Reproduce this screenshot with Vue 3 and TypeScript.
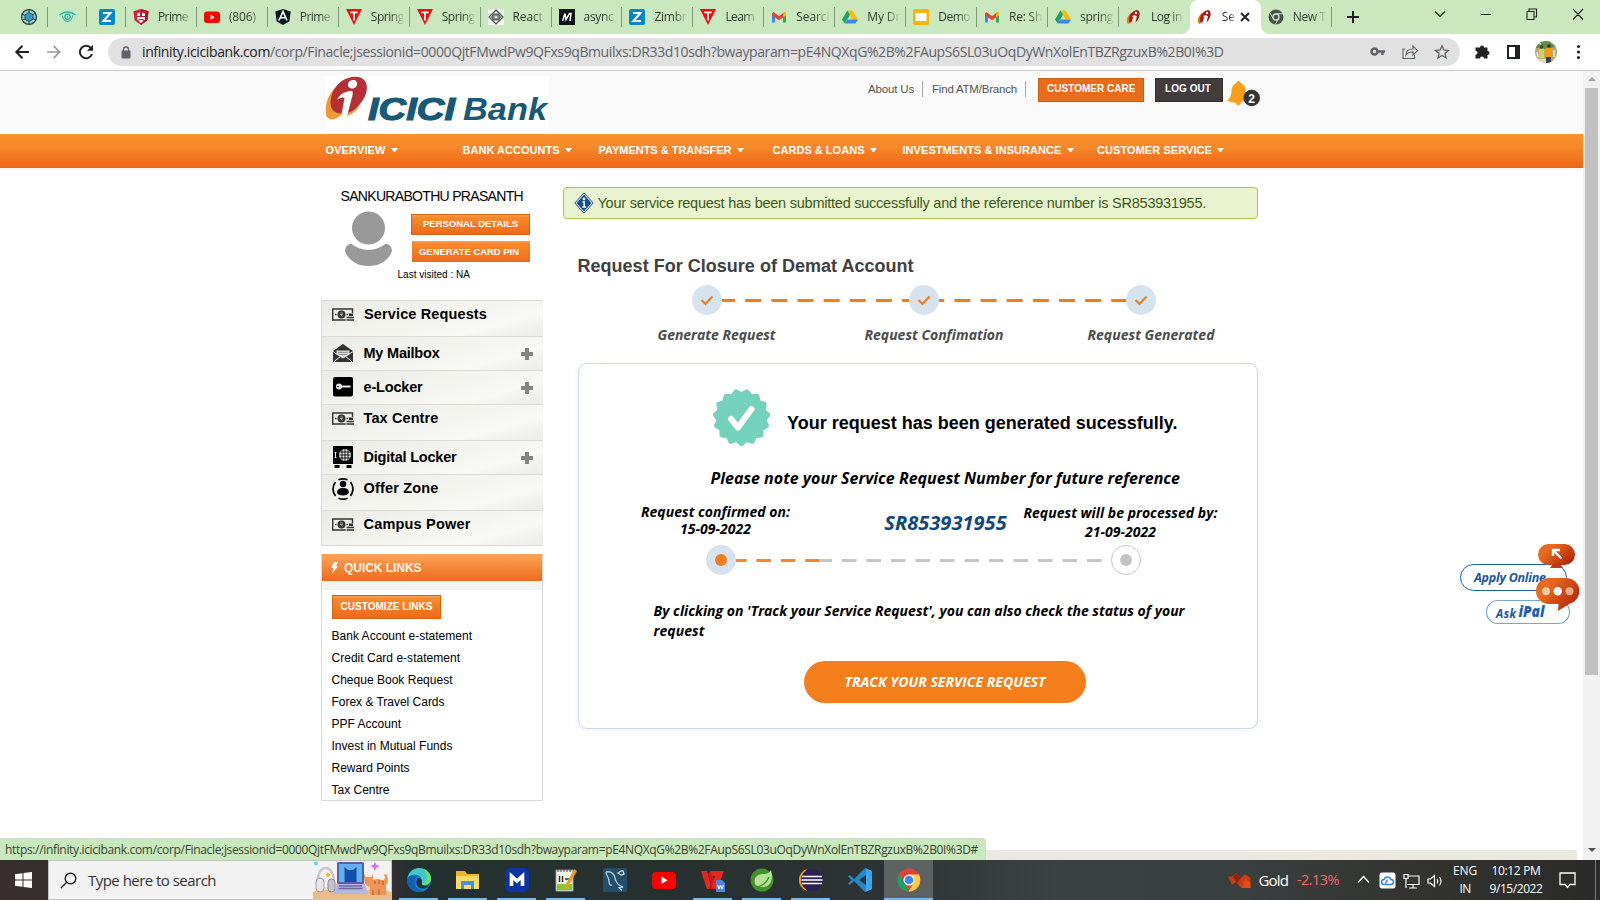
<script setup lang="ts">
interface Tab { icon: string; label?: string; w?: number; active?: boolean }
interface NavItem { label: string; gap: number; w: number }
interface MenuItem { icon: string; label: string; w: number; h: number; top: number; plus?: boolean }

// Stretches or tightens a line of text to a given width through its letter spacing.
const vFit = {
  mounted(el: HTMLElement, binding: { value?: number }) {
    if (!binding.value) return
    const n = (el.textContent ?? '').trim().length
    el.style.letterSpacing = `${(binding.value - el.getBoundingClientRect().width) / n}px`
  },
}

const tabs: Tab[] = [
  { icon: 'shield', label: 'Prime', w: 30 },
  { icon: 'youtube', label: '(806)', w: 27 },
  { icon: 'angular', label: 'Prime', w: 30 },
  { icon: 'tri', label: 'Spring', w: 33 },
  { icon: 'tri', label: 'Spring', w: 33 },
  { icon: 'react', label: 'React', w: 30 },
  { icon: 'medium', label: 'async', w: 30 },
  { icon: 'zimbra', label: 'Zimbr', w: 32 },
  { icon: 'tri', label: 'Learn', w: 29 },
  { icon: 'gmail', label: 'Searcl', w: 33 },
  { icon: 'drive', label: 'My Dr', w: 33 },
  { icon: 'slides', label: 'Demo', w: 32 },
  { icon: 'gmail', label: 'Re: Sh', w: 33 },
  { icon: 'drive', label: 'spring', w: 33 },
  { icon: 'icici', label: 'Log in', w: 31 },
  { icon: 'icici', label: 'Se', w: 13, active: true },
  { icon: 'chrome', label: 'New T', w: 33 },
]

const nav: NavItem[] = [
  { label: 'OVERVIEW', gap: 325.5, w: 60 },
  { label: 'BANK ACCOUNTS', gap: 65, w: 97 },
  { label: 'PAYMENTS & TRANSFER', gap: 27, w: 133 },
  { label: 'CARDS & LOANS', gap: 29, w: 92 },
  { label: 'INVESTMENTS & INSURANCE', gap: 26, w: 159 },
  { label: 'CUSTOMER SERVICE', gap: 23.5, w: 115 },
]

const menu: MenuItem[] = [
  { icon: 'cash', label: 'Service Requests', w: 123, h: 36, top: 4 },
  { icon: 'mail', label: 'My Mailbox', w: 76, h: 34, top: 7, plus: true },
  { icon: 'key', label: 'e-Locker', w: 59, h: 34, top: 7, plus: true },
  { icon: 'cash', label: 'Tax Centre', w: 75, h: 36, top: 4 },
  { icon: 'safe', label: 'Digital Locker', w: 93, h: 34, top: 7, plus: true },
  { icon: 'offer', label: 'Offer Zone', w: 75, h: 36, top: 4 },
  { icon: 'cash', label: 'Campus Power', w: 107, h: 36, top: 4 },
]

const links = [
  { label: 'Bank Account e-statement', w: 140.5 },
  { label: 'Credit Card e-statement', w: 128.5 },
  { label: 'Cheque Book Request', w: 121 },
  { label: 'Forex & Travel Cards', w: 113 },
  { label: 'PPF Account', w: 69.5 },
  { label: 'Invest in Mutual Funds', w: 121 },
  { label: 'Reward Points', w: 78 },
  { label: 'Tax Centre', w: 58 },
]

const apps = [
  { name: 'edge', open: true }, { name: 'folder', open: true }, { name: 'm', open: true },
  { name: 'notepad', open: true }, { name: 'mysql' }, { name: 'yt' }, { name: 'wps', open: true },
  { name: 'spring', open: true }, { name: 'eclipse', open: true }, { name: 'vscode' },
  { name: 'chrome', open: true, active: true },
]

const teeth = 15
const seal = Array.from({ length: teeth * 3 }, (_, i) => {
  const step = (Math.PI * 2) / teeth
  const k = Math.floor(i / 3)
  const off = [0, 0.42, 0.58][i % 3]
  const r = i % 3 === 0 ? 25.4 : 28.7
  const a = -Math.PI / 2 + step * (k + off)
  return `${(28.5 + r * Math.cos(a)).toFixed(2)},${(28.5 + r * Math.sin(a)).toFixed(2)}`
}).join(' ')
</script>

<template>
  <div class="screen">
    <div class="tabstrip">
      <div class="mini first">
        <svg width="18" height="18" viewBox="0 0 18 18"><circle cx="9" cy="9" r="7.4" fill="#a9cfc9" stroke="#24413f" stroke-width="1.3" /><path d="M9 1v4M9 13v4M1.5 6l4 1.5M12.500 10.500l4 1.500M2 12.500l4-2M12 7l4-2" stroke="#24413f" /><path d="M9 4.500l4 2.300v4.500L9 13.500l-4-2.200V6.800z" fill="#3099c5" stroke="#1c4e63" /></svg>
      </div>
      <div class="mini second">
        <svg width="17" height="12" viewBox="0 0 17 12"><path d="M.5 4Q8.500-2 16.500 4" fill="none" stroke="#27b5ad" stroke-width="1.500" /><path d="M3.500 4.500Q4 10 8.500 10.500 13 10 13.500 4.500" fill="none" stroke="#27b5ad" stroke-width="1" /><circle cx="8.500" cy="5.800" r="2.600" fill="none" stroke="#27b5ad" stroke-width="1.300" /><circle cx="8.500" cy="5.800" r=".9" fill="#27b5ad" /></svg>
      </div>
      <div class="mini third">
        <svg width="16" height="16" viewBox="0 0 16 16"><rect width="16" height="16" rx="2" fill="#0089c9" /><path d="M4 4h7.500L4.500 12H12" fill="none" stroke="#fff" stroke-width="2" /></svg>
      </div>
      <div v-for="(t, i) in tabs" :key="i" class="tab" :class="{ active: t.active, before: i === 14 }">
        <svg class="fav" width="16" height="16" viewBox="0 0 16 16">
          <g v-if="t.icon === 'shield'"><path d="M8 0l7.500 2.300-1 9L8 16l-6.500-4.700-1-9z" fill="#dd1b36" /><path d="M8 0l7.500 2.300-1 9L8 16z" fill="#b3142b" /><path d="M4 4.500l3-1v3.500H4zM9 3.500l3 1V7H9zM4 8h8v2.500l-1.500 1.200V10h-5v1.700L4 10.500zM6.300 11h3.400v2l-1.700 1-1.700-1z" fill="#fff" /></g>
          <g v-else-if="t.icon === 'youtube'"><rect y="2.500" width="16" height="11.500" rx="3" fill="red" /><path d="M6.500 5.700v5L10.800 8.200z" fill="#fff" /></g>
          <g v-else-if="t.icon === 'angular'"><path d="M8 0l7.700 2.600-1.200 9.700L8 16l-6.500-3.700L.3 2.600z" fill="#0e1621" /><path d="M4 11.500L8 2.500l4 9M5.600 8.800h4.800" fill="none" stroke="#fff" stroke-width="1.600" /></g>
          <g v-else-if="t.icon === 'tri'"><path d="M0 0h16L8 16z" fill="#f40d0d" /><path d="M4.300 3.400h7.400M8 3.400v8" stroke="#fff" stroke-width="1.800" /></g>
          <g v-else-if="t.icon === 'react'"><path d="M0 0h16v16H0z" fill="#f5f5f5" /><path d="M8 1l7 7-7 7-7-7z" fill="none" stroke="#444" stroke-width="1.100" /><path d="M5.500 5h5l2 3-2 3h-5l-2-3z" fill="#6f9480" stroke="#333" stroke-width=".8" /><circle cx="8" cy="8" r="1.300" fill="#e4eee8" /></g>
          <g v-else-if="t.icon === 'medium'"><path d="M0 0h16v16H0z" fill="#111118" /><path d="M3.500 12L6 4.500l1 6 3.500-6 1.500 0-1 7.500" fill="none" stroke="#fff" stroke-width="1.500" /></g>
          <g v-else-if="t.icon === 'zimbra'"><rect width="16" height="16" rx="2" fill="#0089c9" /><path d="M4 4h7.500L4.500 12H12" fill="none" stroke="#fff" stroke-width="2" /></g>
          <g v-else-if="t.icon === 'gmail'"><path d="M1 4v9.500h3V7z" fill="#4285f4" /><path d="M15 4v9.500h-3V7z" fill="#34a853" /><path d="M1 4.500L2.500 3 8 7.300 13.500 3 15 4.500v1.800L8 11.300 1 6.300z" fill="#ea4335" /><path d="M12 5l1.600-2L15 4.500v2L12 8.600z" fill="#fbbc04" /></g>
          <g v-else-if="t.icon === 'drive'"><path d="M5.400 1.500h5L16 10.500h-5.200z" fill="#fbbc04" /><path d="M5.400 1.500L8 5.800 2.700 14.500 0 10.500z" fill="#1fa463" /><path d="M5.200 10.500H16l-2.600 4H2.700z" fill="#4285f4" /></g>
          <g v-else-if="t.icon === 'slides'"><rect width="16" height="16" rx="2" fill="#f7b407" /><path d="M2.500 4h11v8h-11z" fill="#fff" /></g>
          <g v-else-if="t.icon === 'icici'"><path d="M5 4C0 8 0 13 2 15l3-1L8 7z" fill="#e5791f" /><path d="M3.500 13C1.500 8 6 1.500 11 1c4 .5 3.500 8-1.500 12.500L11 7 7 7.500 5.500 13z" fill="#a31a1f" /><circle cx="10" cy="4" r="1.200" fill="#fff" /><path d="M6.500 7.500Q8 6.700 9.300 7L7.500 13" fill="none" stroke="#fff" stroke-width="1.100" /></g>
          <g v-else><circle cx="8" cy="8" r="7.500" fill="#4b4f52" /><circle cx="8" cy="8" r="3" fill="#4b4f52" stroke="#cae8bd" stroke-width="1.300" /><path d="M8 4.800h7M5.200 9.500L2 4M10.700 9.500L7.300 15.300" stroke="#cae8bd" /></g>
        </svg>
        <span class="tlabel" :class="{ short: t.active }"><span v-fit="t.w">{{ t.label }}</span></span>
        <svg v-if="t.active" class="x" width="10" height="10" viewBox="0 0 10 10"><path d="M1 1l8 8M9 1L1 9" stroke="#222" stroke-width="1.900" /></svg>
      </div>
      <svg class="newtab" width="12" height="12" viewBox="0 0 12 12"><path d="M6 0v12M0 6h12" stroke="#202124" stroke-width="2" /></svg>
      <svg class="winctl" width="160" height="14" viewBox="0 0 160 14" fill="none" stroke="#222" stroke-width="1.100"><path d="M5 4.500l5 5 5-5M51 7.500h10M97 4.500h7v8h-7zM99 4.500V2h7.500v8H104M143 2l10 10.500M153 2l-10 10.500" /></svg>
    </div>

    <div class="toolbar">
      <svg class="navicons" width="80" height="18" viewBox="0 0 80 18" fill="none" stroke-width="2">
        <path d="M15 9H2.500M8.500 2.800L2.300 9l6.200 6.200" stroke="#202124" />
        <path d="M33 9h12M39.500 2.800L45.700 9l-6.200 6.200" stroke="#9b9b9b" stroke-width="1.700" />
        <path d="M77 5.200A6.200 6.200 0 1 0 78 11" stroke="#202124" /><path d="M79 1.800v6h-6z" fill="#202124" />
      </svg>
      <div class="omnibox">
        <svg class="lock" width="10" height="13" viewBox="0 0 10 13"><rect x=".5" y="4.500" width="9" height="8" rx="1" fill="#5f6368" /><path d="M2.500 5V3.500a2.500 2.500 0 0 1 5 0V5" fill="none" stroke="#5f6368" stroke-width="1.300" /></svg>
        <span v-fit="128" class="host">infinity.icicibank.com</span><span v-fit="953.500" class="path">/corp/Finacle;jsessionid=0000QjtFMwdPw9QFxs9qBmuilxs:DR33d10sdh?bwayparam=pE4NQXqG%2B%2FAupS6SL03uOqDyWnXolEnTBZRgzuxB%2B0I%3D</span>
        <svg class="omniicons" width="80" height="16" viewBox="0 0 80 16" fill="none" stroke="#5f6368" stroke-width="1.300">
          <circle cx="4.500" cy="7.500" r="3" stroke-width="2.500" /><path d="M8 7.500h7M12.500 7.500v3.500" stroke-width="2.500" />
          <path d="M35 5H33v9.500h11.500V11M36 11c0-4 3-6 7-6V2l4.500 4.700L43 11V8c-3 0-5.500.500-7 3z" stroke-width="1.100" />
          <path d="M72 1.800l1.900 4.200 4.600.4-3.500 3 1.100 4.600-4.100-2.500L68 14l1-4.600-3.500-3 4.700-.4z" />
        </svg>
      </div>
      <svg class="ext" width="130" height="24" viewBox="0 0 130 24">
        <path d="M3.500 7.500H7a2 2 0 1 1 4 0h3.500V11a2 2 0 1 1 0 4v3.500H11a2 2 0 0 0-4 0H2.500v-3.700a2 2 0 0 0 0-4V7.500z" fill="#202124" />
        <path d="M35 6h11v12H35z" fill="#fff" stroke="#202124" stroke-width="2" /><path d="M42 6h5v12h-5z" fill="#202124" />
        <clipPath id="av"><circle cx="73" cy="12" r="11" /></clipPath>
        <g clip-path="url(#av)"><path d="M62 0h22v24H62z" fill="#b8a877" /><path d="M62 0h22v6l-9 3-13-1z" fill="#5d8e48" /><path d="M66 9h5v9h-5z" fill="#c7d94a" /><path d="M73 8h6v9h-6z" fill="#f09b10" /><path d="M73 17h5v7h-5z" fill="#3b3d54" /><circle cx="68.500" cy="7" r="1.800" fill="#5b3a28" /><circle cx="76" cy="6" r="1.800" fill="#4a2d22" /><path d="M62 19h11v5H62z" fill="#e5d9c2" /><path d="M63 2l5 2M78 2l4 3M64 12l1 5M81 10v7" stroke="#f3ecd0" stroke-width="1.500" /></g>
        <g fill="#202124"><circle cx="105.500" cy="6.500" r="1.600" /><circle cx="105.500" cy="12" r="1.600" /><circle cx="105.500" cy="17.500" r="1.600" /></g>
      </svg>
    </div>

    <div class="viewport">
      <div class="page">
        <div class="header">
          <div class="logo">
            <svg width="224" height="53" viewBox="0 0 224 53">
              <path d="M10 12C1 20-1 36 2 41c3 4 9 3 14-2L31 34 20 12z" fill="#f3982f" />
              <path d="M31 .8C44 1 44 15 38 24 34 30 29 35 23 38L15 37.500C5 36 4 28 7 18 11 7 21 .5 31 .8z" fill="#b53034" />
              <path d="M21.500 40c6-2 11-6 14.500-12-4 4-9 8-14 9z" fill="#f3982f" />
              <ellipse cx="27.500" cy="8.200" rx="4.700" ry="4.200" fill="#fff" transform="rotate(-25 27.500 8.200)" />
              <path d="M12 24c3-6.500 9-9 15-9 1.500 1 .5 5-1 10L22 40l-6.500 3.500L19.500 22c-3-1-5 0-7.500 2z" fill="#fff" />
              <text class="lt heavy" x="43" y="44" textLength="87" lengthAdjust="spacingAndGlyphs">ICICI</text>
              <text class="lt" x="138" y="44" textLength="84" lengthAdjust="spacingAndGlyphs">Bank</text>
            </svg>
          </div>
          <div class="toplinks">
            <span v-fit="46">About Us</span><i /><span v-fit="85">Find ATM/Branch</span><i />
          </div>
          <div class="btn care"><span v-fit="88.500">CUSTOMER CARE</span></div>
          <div class="btn out"><span v-fit="46">LOG OUT</span></div>
          <div class="bell">
            <svg width="34" height="28" viewBox="0 0 34 28"><path d="M11 1c2 0 2.500 2 2.500 2 4.500 2 5 5 5 9 0 5 1 6 3 8L14 22c0 4-5 4-5 1L0 21c3-3 4-5 4.500-9 0-5 2-8 5-9 0-1 .5-2 1.500-2z" fill="#ff9e18" /><circle cx="24.700" cy="18" r="8.300" fill="#333" /><text x="24.700" y="22.600" text-anchor="middle" class="bn">2</text></svg>
          </div>
        </div>
        <div class="nav">
          <div v-for="n in nav" :key="n.label" class="navitem" :style="{ marginLeft: n.gap + 'px' }"><span v-fit="n.w">{{ n.label }}</span><b /></div>
        </div>
        <div class="after" />

        <div class="body">
          <div class="side">
            <div class="name"><span v-fit="182.500">SANKURABOTHU PRASANTH</span></div>
            <div class="profile">
              <svg width="48" height="56" viewBox="0 0 48 56"><circle cx="23.500" cy="17" r="16.500" fill="#999" /><path d="M6 32.500C16 41 31 41 41 32.500q6 1.500 6 7.500C44 49 35 55 23.500 55S3 49 0 40q0-6 6-7.500z" fill="#999" /></svg>
              <div class="pbtns">
                <div class="pb bordered"><span v-fit="95">PERSONAL DETAILS</span></div>
                <div class="pb"><span v-fit="100">GENERATE CARD PIN</span></div>
              </div>
            </div>
            <div class="last"><span v-fit="72.500">Last visited : NA</span></div>
            <div class="menu">
              <div v-for="m in menu" :key="m.label" class="mi" :style="{ height: m.h + 'px', paddingTop: m.top + 'px' }">
                <svg width="24" height="22" viewBox="0 0 24 22">
                  <g v-if="m.icon === 'cash'"><path d="M20.500 9V5H.7v11h13" fill="none" stroke="#333" stroke-width="1.400" /><circle cx="9.500" cy="10.500" r="4" fill="#333" /><path d="M8 9h3M8 10.500h3M9 10.500l1.500 2" stroke="#ccc" stroke-width=".7" fill="none" /><path d="M3 10.500h1.500M14.500 10.500H16" stroke="#333" stroke-width="1.500" /><path d="M17 9.500h4v2.500h-4z" fill="#333" /><path d="M14.500 13.500H22M14.500 16H22" stroke="#333" stroke-width="1.700" /></g>
                  <g v-else-if="m.icon === 'mail'"><path d="M1 8L11 1l10 7v11H1z" fill="#333" /><path d="M4.500 7.500h13v4L11 15l-6.500-3.500z" fill="#d4d4ce" /><path d="M2 18.500l6.500-5M20 18.500l-6.500-5M1 8.500l10 6.500 10-6.500" stroke="#eee" fill="none" /><path d="M6 9.500h10M7 11.500h8" stroke="#888" stroke-width=".8" /></g>
                  <g v-else-if="m.icon === 'key'"><rect x="1" y="0" width="20" height="19.500" rx="2" fill="#000" /><circle cx="7" cy="9.500" r="3" fill="#e9e9e9" /><path d="M9 9.500h9.500" stroke="#e9e9e9" stroke-width="2" /><circle cx="6" cy="9.500" r=".8" fill="#000" /></g>
                  <g v-else-if="m.icon === 'safe'"><path d="M1-1h20v18H1zM2.500 18h5v3h-5zM14.500 18h5v3h-5z" fill="#000" /><circle cx="13" cy="8" r="6" fill="#eee" /><path d="M7.500 5h11M7.500 8h11M7.500 11h11M10 2.500v11M13 2v12M16 2.500v11" stroke="#000" stroke-width=".9" /><path d="M2.500 5.500h2M2.500 10.500h2M3.500 5.500v5" stroke="#eee" /></g>
                  <g v-else><circle cx="11" cy="6" r="3.200" /><path d="M5 15q0-5 6-5t6 5q-2 2.500-6 2.500t-6-2.500z" /><path d="M3.500 4Q-1.500 11 3.500 18M18.500 4q5 7 0 14M6.500 1.800q4.500-2 9 0M6.500 20.200q4.500 2 9 0" fill="none" stroke="#000" stroke-width="1.700" /></g>
                </svg>
                <span class="ml"><span v-fit="m.w">{{ m.label }}</span></span>
                <i v-if="m.plus" class="plus" />
              </div>
            </div>
            <div class="quick">
              <div class="qh"><svg width="7" height="12" viewBox="0 0 7 12"><path d="M3 0h4L5 4h2L1 12l1.500-6H0z" fill="#fff" /></svg><span v-fit="77.500">QUICK LINKS</span></div>
              <div class="qs" />
              <div class="cust"><span v-fit="92">CUSTOMIZE LINKS</span></div>
              <div v-for="l in links" :key="l.label" class="ql"><span v-fit="l.w">{{ l.label }}</span></div>
            </div>
          </div>

          <div class="main">
            <div class="msg">
              <svg width="20" height="22" viewBox="0 0 20 22"><path d="M10 .8L19.200 11 10 21.200.8 11z" fill="#fff" stroke="#1c4d80" /><path d="M10 2.500l7.500 8.500-7.500 8.500L2.500 11z" fill="#14508f" /><circle cx="10" cy="7" r="1.400" fill="#fff" /><path d="M8.500 10h1.700v4.500M8.300 15h3.800" stroke="#fff" stroke-width="1.500" fill="none" /></svg>
              <span v-fit="608.500">Your service request has been submitted successfully and the reference number is SR853931955.</span>
            </div>
            <div class="title"><span v-fit="336">Request For Closure of Demat Account</span></div>
            <svg class="steps" width="695" height="30" viewBox="0 0 695 30">
              <path d="M156 15.500H563" stroke="#f27d1b" stroke-width="3" stroke-dasharray="16 10.150" />
              <g v-for="x in [144, 361, 578]" :key="x"><circle :cx="x" cy="15" r="15" fill="#d6e3ee" /><path :d="`M${x - 5.500} 15l4 4 7-7.500`" fill="none" stroke="#f27d1b" stroke-width="2.200" /></g>
            </svg>
            <div class="labels"><span v-fit="118">Generate Request</span><span v-fit="139">Request Confimation</span><span v-fit="127">Request Generated</span></div>
            <div class="card">
              <div class="done">
                <svg width="57" height="57" viewBox="0 0 57 57"><polygon :points="seal" fill="#74d2bc" /><path d="M18 30l7 8.500L38.500 20" fill="none" stroke="#fff" stroke-width="6" stroke-linejoin="round" stroke-linecap="round" /></svg>
                <span v-fit="390.500">Your request has been generated sucessfully.</span>
              </div>
              <div class="note"><span v-fit="469.500">Please note your Service Request Number for future reference</span></div>
              <div class="info">
                <div class="c1"><span v-fit="149">Request confirmed on:</span><span v-fit="71">15-09-2022</span></div>
                <div class="c2"><span v-fit="122.500">SR853931955</span></div>
                <div class="c3"><span v-fit="194">Request will be processed by:</span><span v-fit="71">21-09-2022</span></div>
              </div>
              <svg class="track" width="678" height="30" viewBox="0 0 678 30">
                <path d="M153 15.500h88" stroke="#f6862c" stroke-width="2.800" stroke-dasharray="14.500 9.900" />
                <path d="M241 15.500h12M263 15.500H524" stroke="#c6c6c6" stroke-width="2.800" stroke-dasharray="14.500 10" />
                <circle cx="142" cy="15" r="15" fill="#d6e3ee" /><circle cx="142" cy="15" r="6" fill="#f27d1b" />
                <circle cx="547" cy="15" r="14.500" fill="#fff" stroke="#c4c4c4" /><circle cx="547" cy="15" r="6" fill="#c4c4c4" />
              </svg>
              <div class="para"><span v-fit="531">By clicking on 'Track your Service Request', you can also check the status of your</span><span v-fit="51">request</span></div>
              <div class="cta"><span v-fit="201">TRACK YOUR SERVICE REQUEST</span></div>
            </div>
          </div>
        </div>
        <div class="foot" />
        <svg class="ipal" width="125" height="90" viewBox="0 0 125 90">
          <defs><linearGradient id="og" x1="0" y1="0" x2="1" y2=".6"><stop offset=".3" stop-color="#e96c1e" /><stop offset="1" stop-color="#b52a0a" /></linearGradient></defs>
          <rect x="2.500" y="24.500" width="106" height="26" rx="13" fill="#fff" stroke="#1f62a5" />
          <rect x="28.500" y="60.500" width="83" height="23" rx="11.500" fill="#fff" stroke="#7aa5d2" stroke-width="1.200" />
          <text class="ap" x="16" y="41.500" textLength="72">Apply Online</text>
          <text class="ap ask" x="38" y="77.500" textLength="20">Ask</text>
          <text class="ap pal" x="60.500" y="76.500" textLength="26" lengthAdjust="spacingAndGlyphs">iPal</text>
          <rect x="80" y="4" width="37" height="21" rx="10.500" fill="url(#og)" /><path d="M95 24h7l3 4H92z" fill="#bd3b10" />
          <path d="M95 16V10h7M95.500 10.500l8 8" fill="none" stroke="#fff" stroke-width="2.400" />
          <path d="M91 38h18a13 13 0 0 1 3 25.500L100 71l.5-7H91a13 13 0 0 1 0-26z" fill="url(#og)" />
          <circle cx="88" cy="51.300" r="4" fill="#f7c9a9" /><circle cx="99.700" cy="51.300" r="4.200" fill="#fff" /><circle cx="111.500" cy="51.300" r="4" fill="#f2a98c" />
        </svg>
      </div>
      <div class="scroll"><b class="up" /><div class="thumb" /><b class="down" /></div>
      <div class="status"><span v-fit="973">https://infinity.icicibank.com/corp/Finacle;jsessionid=0000QjtFMwdPw9QFxs9qBmuilxs:DR33d10sdh?bwayparam=pE4NQXqG%2B%2FAupS6SL03uOqDyWnXolEnTBZRgzuxB%2B0I%3D#</span></div>
    </div>

    <div class="taskbar">
      <div class="start"><svg width="17" height="16" viewBox="0 0 17 16"><path d="M0 2.200L7.500 1.200v6.300H0zM8.500 1L17 0v7.500H8.500zM0 8.500h7.500v6.300L0 13.800zM8.500 8.500H17V16l-8.500-1z" fill="#fff" /></svg></div>
      <div class="search">
        <svg width="17" height="17" viewBox="0 0 17 17"><circle cx="10.500" cy="6.500" r="5.300" fill="none" stroke="#222" stroke-width="1.400" /><path d="M6.700 10.300L1 16" stroke="#222" stroke-width="1.500" /></svg>
        <span v-fit="128">Type here to search</span>
        <svg class="art" width="78" height="38" viewBox="0 0 78 38">
          <path d="M0 31l14-5h50l14 5v7H0z" fill="#e9bd87" /><path d="M14 26h50l6 3H8z" fill="#f6d9ae" />
          <path d="M5 19C5 3 20 3 21 19" fill="none" stroke="#c9c5cf" stroke-width="2.500" /><rect x="3" y="17" width="8" height="14" rx="4" fill="#e6e3eb" stroke="#a5a0ad" /><rect x="15" y="18" width="7" height="13" rx="3.500" fill="#c6c2cd" stroke="#8a8591" /><circle cx="15" cy="14" r="2" fill="#fdb61c" />
          <rect x="24" y="1" width="27" height="22" rx="1.500" fill="#5b5fa8" /><path d="M26 3h23v18H26z" fill="#5fb2f4" /><path d="M31.500 6l3.500 3h5l3.500-3v15h-12z" fill="#1150a5" /><path d="M23 23h29l3 10H21z" fill="#b7b5dd" /><path d="M26 25h23M25.500 27.500h24" stroke="#6a69a8" stroke-width="1.300" />
          <path d="M51 13l2 3h5l2-3v6q4-2 9 0c3 0 4-2 2-5l2-1c4 6 1 10 0 12v9h-16v-8c-6-1-6-7-6-13z" fill="#ec9757" /><path d="M62 20v3M66 19v4M70 20v4M60 29v5M66 28v6" stroke="#c7642e" stroke-width="1.300" /><path d="M62 1l1.500 3L67 5l-3.500 1.500L62 10l-1.500-3.500L57 5l3.500-1z" fill="#da70e7" /><circle cx="3" cy="2.500" r="2" fill="#61d6e9" />
        </svg>
      </div>
      <div class="apps">
        <div v-for="a in apps" :key="a.name" class="app" :class="{ open: a.open, sel: a.active }">
          <svg width="24" height="24" viewBox="0 0 24 24">
            <g v-if="a.name === 'edge'"><circle cx="12" cy="12" r="12" fill="#1877c9" /><path d="M.5 10C2 3.500 7 0 12 0c7 0 12 5 12 10.500 0 4-3 6.500-7 6.500-3 0-3.500-1.500-2.500-3C16 10 12 6 7.500 6.500 4 7 1.500 8.500.5 10z" fill="#40c9c3" /><path d="M17 1.200c4 2 7 5.500 7 9.500 0 3.800-3 6.300-7 6.300-2 0-3-.8-3-1.700 4 .8 8-3 6-8z" fill="#6ee05d" /><path d="M9 9c-4 6 0 13 7 14.300C8 25.500.5 20 0 12.500 1 8 5 6 9 9z" fill="#1262b3" /><path d="M15 14.500c-1.500 3 3 4.500 7.500 2.500-3 5-12 5-13-2-.3-3 1-5 3-5 1.500 1 3 3 2.500 4.500z" fill="#263238" /></g>
            <g v-else-if="a.name === 'folder'"><path d="M0 3h9l2 3h12v15H0z" fill="#f0b429" /><path d="M0 8h23v13H0z" fill="#ffd869" /><path d="M5 13h13v8h-3v-4H8v4H5z" fill="#3c96da" /></g>
            <g v-else-if="a.name === 'm'"><rect width="24" height="24" rx="5" fill="#0a35a5" /><path d="M6.500 18V8l5.500 5 5.500-5v10" fill="none" stroke="#fff" stroke-width="3.600" /></g>
            <g v-else-if="a.name === 'notepad'"><path d="M2 2h17v21H2z" fill="#f4f4e6" stroke="#999" /><path d="M3 16h15v6H3z" fill="#84c832" /><path d="M4 1v3M7 1v3M10 1v3M13 1v3M16 1v3" stroke="#444" /><path d="M5.500 8v6M8.500 8v6M11 11h4" stroke="#333" stroke-width="1.500" /><path d="M20 1l3 2-10 17-3 2 1-4z" fill="#ec982e" /></g>
            <g v-else-if="a.name === 'mysql'"><rect width="24" height="24" rx="1" fill="#254c69" /><path d="M3 4c5-1 8 2 9 6 1 5 3 7 8 9l-4 .5 3 3M3 4c0 4 3 5 3 9 0 3 1 5 3 4" fill="none" stroke="#a8d4ec" stroke-width="1.300" /><path d="M15 5c2-1 3-3 5-2l1 3-3 1z" stroke="#dae9f2" fill="none" stroke-width="1.200" /></g>
            <g v-else-if="a.name === 'yt'"><rect y="4" width="24" height="17" rx="4" fill="red" /><path d="M9.500 8.500v7.500l6-3.700z" fill="#fff" /></g>
            <g v-else-if="a.name === 'wps'"><path d="M0 3h6l4 14-2 4H6z" fill="#e8261e" /><path d="M10 17L7 6l2.500-3L15 14l-3 7H8z" fill="#c51b15" /><path d="M9 3h14l-7 18h-4l-1-4 3-9h-3z" fill="#e8261e" /><path d="M15 12h6l3 3v9h-9z" fill="#4e85df" /><path d="M16.500 17l1.500 4 1.500-4 1.500 4 1.500-4" stroke="#fff" fill="none" /></g>
            <g v-else-if="a.name === 'spring'"><circle cx="12" cy="12" r="11.500" fill="#429328" /><path d="M21 2c3 12-2 17-9 17-3 0-6-1-7-3C3 8 9 6 14 6c4 0 6-2 7-4z" fill="#b4e294" /><path d="M5 19c6 0 12-4 14-10" fill="none" stroke="#429328" stroke-width="1.500" /></g>
            <g v-else-if="a.name === 'eclipse'"><path d="M8 1A11.500 11.500 0 0 0 8 23Q1 12 8 1z" fill="#f7941e" /><circle cx="13" cy="12" r="11" fill="#2c2255" /><path d="M3 8.500h20M2.500 12h21M3 15.500h20" stroke="#fff" stroke-width="1.600" /></g>
            <g v-else-if="a.name === 'vscode'"><path d="M17 0l7 3v18l-7 3L6 13l-4 4-2-1.500L3.500 12 0 8.500 2 7l4 4zM18 7l-7 5 7 5z" fill="#2489ca" fill-rule="evenodd" /><path d="M18 .500l6 2.500v18l-6 2.500z" fill="#35a8f0" /></g>
            <g v-else><circle cx="12" cy="12" r="11.500" fill="#db4437" /><path d="M2 6.500L8 16l4 7.500C4 23.500-3 15 2 6.500z" fill="#1da462" /><path d="M12 6.500h10C26 15 20 24 11.500 23.500L17 14z" fill="#ffcd42" /><circle cx="12" cy="12" r="5.500" fill="#fff" /><circle cx="12" cy="12" r="4.300" fill="#4285f4" /></g>
          </svg>
        </div>
      </div>
      <div class="tray">
        <svg class="gold" width="24" height="16" viewBox="0 0 24 16"><path d="M0 4.500h4L8 1l5 5 4-4 5.500 4v10H13L8 10l-4 3z" fill="#c63c13" /><path d="M8 1l5 5-4 5-4-6z" fill="#8f260b" /><path d="M17 6l5.500 5v5H14z" fill="#e14b17" /></svg>
        <span class="g"><span v-fit="29.500">Gold</span></span><span class="pct"><span v-fit="42">-2.13%</span></span>
        <svg class="sys" width="86" height="18" viewBox="0 0 86 18" fill="none" stroke="#fff" stroke-width="1.200">
          <path d="M1 10.500l5.500-6 5.500 6" /><rect x="22.500" y=".5" width="16" height="16" rx="2.500" fill="#fff" stroke="none" /><path d="M27 12.500a2.500 2.500 0 0 1 0-5 3.700 3.700 0 0 1 7 0 2.500 2.500 0 0 1 0 5zM30.500 7.500l-2 4" stroke="#3c7df0" stroke-width="1.500" />
          <path d="M51 4h11v8.500H50M56 12.500V16M52 16h8M47 2.500h4v4h-4zM49 6.500V16" /><path d="M71 7h2.500l4-3.500v11l-4-3.500H71zM80 7q1.500 2 0 4.500M82.500 5q3 4 0 8.500" />
        </svg>
        <div class="two lang"><span v-fit="24">ENG</span><span v-fit="11">IN</span></div>
        <div class="two clock"><span v-fit="49">10:12 PM</span><span v-fit="53">9/15/2022</span></div>
        <svg class="note-i" width="17" height="17" viewBox="0 0 17 17"><path d="M1 1h15v11.500h-5L8.500 15.500 6 12.500H1z" fill="none" stroke="#fff" stroke-width="1.300" /></svg>
        <i class="peek" />
      </div>
    </div>
  </div>
</template>

<style>
html, body { margin: 0; background: #fff; overflow: hidden; }
</style>

<style scoped>
.screen { width: 1600px; height: 900px; display: flex; flex-direction: column; overflow: hidden; font-family: "Liberation Sans", Arial, sans-serif; color: #000; }
.screen * { box-sizing: border-box; }
.screen span { white-space: nowrap; }
.screen span:not([class]) { display: inline-block; }
svg { display: block; flex: none; }

.tabstrip { height: 34px; flex: none; display: flex; background: #cae8bd; font: 12px/17px "Open Sans", sans-serif; color: #2e3a2e; }
.mini { display: flex; align-items: center; justify-content: center; position: relative; flex: none; }
.mini::after, .tab::after { content: ""; position: absolute; right: 0; top: 7px; height: 20px; width: 1px; background: #849a7c; }
.first { width: 48px; padding-left: 9px; }
.second { width: 39px; }
.third { width: 39px; }
.tab { width: 70.930px; flex: none; position: relative; display: flex; align-items: center; padding-left: 7px; }
.tlabel { width: 35px; margin-left: 9px; height: 18px; mask-image: linear-gradient(90deg, #000 55%, rgba(0, 0, 0, .1) 94%); }
.tlabel.short { width: 15px; }
.tab.active { background: #fff; border-radius: 8px 8px 0 0; }
.tab.active::before { content: ""; position: absolute; left: -8px; right: -8px; bottom: 0; height: 8px; background: radial-gradient(circle at 0 0, transparent 7.500px, #fff 8px) left / 8px 8px no-repeat, radial-gradient(circle at 100% 0, transparent 7.500px, #fff 8px) right / 8px 8px no-repeat; }
.tab.active::after, .tab.before::after { display: none; }
.x { margin-left: 3px; }
.newtab { margin: 11px 0 0 15px; }
.winctl { margin: 7px 0 0 71px; }

.toolbar { height: 37px; flex: none; display: flex; background: #fff; border-bottom: 1px solid #c9c9c9; }
.navicons { margin: 9px 0 0 14px; }
.omnibox { margin: 4px 0 0 14px; width: 1352px; height: 28px; border-radius: 14px; background: #e1e1e1; display: flex; align-items: center; font: 14px/28px "Open Sans", sans-serif; color: #5f6368; flex: none; }
.lock { margin: 0 11px 0 13px; }
.host { color: #202124; }
.omniicons { margin-left: 146px; }
.ext { margin: 6px 0 0 13px; }

.viewport { height: 789px; flex: none; display: flex; position: relative; }
.page { width: 1583px; display: flex; flex-direction: column; position: relative; background: #fff; }
.header { height: 58px; background: #fafafa; display: flex; flex: none; }
.logo { margin: 5px 0 0 325px; width: 224px; height: 53px; background: #fff; }
.lt { font: italic bold 31px "Liberation Sans", sans-serif; fill: #175a78; }
.heavy { stroke: #175a78; stroke-width: 1.200px; }
.toplinks { display: flex; margin-left: 319px; width: 170px; padding-top: 10px; font-size: 11.500px; line-height: 17px; color: #555; }
.toplinks i { width: 1px; height: 16px; background: #aaa9a0; margin: 0 9px 0 8px; }
.btn { height: 24px; margin-top: 7px; font: bold 10px/20px "Liberation Sans", sans-serif; color: #fff; flex: none; }
.care { width: 106px; padding-left: 8px; background: #ea6b18; border: 1px solid #cf5e0c; }
.out { width: 68px; margin-left: 11px; padding-left: 9px; background: #433c3c; border: 1px solid #332e2e; }
.bell { margin: 9px 0 0 4px; }
.bn { font: bold 12px "Liberation Sans", sans-serif; fill: #fff; }
.nav { margin-top: 5px; height: 34px; flex: none; display: flex; background: linear-gradient(#f9932d, #f7872a 40%, #ef6416); color: #fff; font: bold 11px/32px "Liberation Sans", sans-serif; }
.navitem { display: flex; flex: none; }
.navitem b { margin: 14px 0 0 5px; width: 7px; height: 4px; border: 3.500px solid transparent; border-top: 4px solid #fff; border-bottom: 0; }
.after { height: 6px; background: linear-gradient(#f7f7f7, #fff); flex: none; }

.body { display: flex; padding-left: 321px; }
.side { width: 222px; }
.name { margin: 14px 0 0 19.500px; height: 16px; font-size: 14px; line-height: 16px; }
.profile { display: flex; height: 64px; padding: 7px 0 0 24px; }
.pbtns { margin: 3px 0 0 18px; width: 119px; }
.pb { height: 21px; margin: 0 0 6px 1px; padding-left: 7px; background: linear-gradient(#f9a155, #f78a2b 12%, #ee6a1b); color: #fff; font: bold 9.500px/21px "Liberation Sans", sans-serif; }
.bordered { margin-left: 0; padding-left: 11px; border: 1px solid #d96410; line-height: 18px; }
.last { margin: 1px 0 0 76.500px; height: 12px; font-size: 10px; line-height: 12px; }
.menu { margin-top: 19px; border: solid #dcdcda; border-width: 0 0 0 1px; height: 246px; }
.mi { display: flex; background: linear-gradient(165deg, #eaebe7, #f3f4ee 45%, #f8f8f4 75%, #ebece6); border-top: 1px solid #d9d9d6; padding-left: 10px; }
.mi:last-child { border-bottom: 1px solid #d9d9d6; }
.mi svg { margin-top: -1px; overflow: visible; }
.ml { margin-left: 8px; font: bold 14.500px/18px "Liberation Sans", sans-serif; }
.mi:not(:first-child) .ml { margin-left: 7.500px; }
.plus { margin: 4px 10px 0 auto; width: 12px; height: 12px; background: linear-gradient(#84857c, #84857c) center / 12px 4px no-repeat, linear-gradient(#84857c, #84857c) center / 4px 12px no-repeat; }
.quick { margin-top: 8px; width: 222px; height: 247px; border: 1px solid #dadada; border-top: 0; }
.qh { height: 27px; background: linear-gradient(#fba45a, #f68739 50%, #ef6a1c); display: flex; padding: 0 0 0 9px; color: #fff4e4; font: bold 12px/28px "Liberation Sans", sans-serif; }
.qh svg { margin: 8px 6px 0 0; }
.qs { height: 9px; background: #f3f4f0; }
.cust { margin: 5px 0 6px 10px; width: 109px; height: 24px; padding-left: 7.500px; background: linear-gradient(#f9a155, #f78a2b 12%, #ee6a1b); border: 1px solid #d96410; color: #fff; font: bold 10px/22px "Liberation Sans", sans-serif; }
.ql { height: 22px; padding-left: 9.500px; font-size: 12px; line-height: 22px; }

.main { margin-left: 20px; width: 695px; }
.msg { margin-top: 13px; height: 32px; border: 1px solid #a5cb3d; border-radius: 4px; background: #eaf3d0; display: flex; align-items: center; padding-left: 10px; font-size: 14.500px; line-height: 30px; color: #3c5a14; }
.msg span { margin-left: 3.500px; }
.title { margin: 35px 0 0 14.500px; height: 24px; font: bold 18px/24px "Liberation Sans", sans-serif; color: #404040; }
.steps { margin-top: 7px; }
.labels { margin: 10px 0 0 94.500px; height: 20px; display: flex; font: italic 700 14px/20px "Open Sans", sans-serif; color: #4c4c4c; }
.labels span { margin-right: 89px; flex: none; }
.labels span:nth-child(2) { margin-right: 84px; }
.card { margin: 18px 0 0 15px; width: 680px; height: 366px; border: 1px solid #cfd7ee; border-radius: 9px; background: #fff; box-shadow: 0 2px 6px rgba(200, 210, 240, .25); font: italic 700 14px/17px "Open Sans", sans-serif; }
.done { display: flex; padding: 25px 0 0 134px; height: 82px; font: bold 18px/20px "Liberation Sans", sans-serif; }
.done span { margin: 24px 0 0 17px; }
.note { margin: 21px 0 0 131.500px; height: 22px; font-size: 16px; line-height: 22px; }
.info { margin-top: 14px; height: 42px; display: flex; }
.info > div { display: flex; flex-direction: column; align-items: center; flex: none; }
.c1 { margin-left: 62px; width: 149px; }
.c2 { margin-left: 94px; width: 123px; padding-top: 8px; font-size: 20px; line-height: 24px; color: #0f487c; }
.c3 { margin-left: 16.500px; width: 194px; line-height: 19px; }
.para { margin: 26px 0 0 74.500px; height: 40px; line-height: 20px; display: flex; flex-direction: column; align-items: flex-start; }
.cta { margin: 20px 0 0 225px; width: 282px; height: 42px; border-radius: 21px; background: #f37e1b; color: #fff; text-align: center; line-height: 41px; }
.foot { margin-top: auto; height: 10px; width: 1577px; background: #e9e9e1; }
.ipal { position: absolute; left: 1458px; top: 469px; }
.ap { font: italic 700 12.500px "Open Sans", sans-serif; fill: #1e5799; }
.ask { font-size: 11.500px; }
.pal { font-size: 15px; font-weight: 800; fill: #1d5fae; }
.scroll { width: 17px; background: #f1f1f1; padding: 6px 2px 0; display: flex; flex-direction: column; align-items: center; }
.scroll b { border: 4px solid transparent; width: 8px; height: 4px; }
.up { border-top: 0 !important; border-bottom-color: #a3a3a3 !important; }
.down { border-bottom: 0 !important; border-top-color: #505050 !important; margin: auto 0 8px; }
.thumb { margin-top: 7px; width: 13px; height: 587px; background: #c1c1c1; flex: none; }
.status { position: absolute; left: 0; bottom: 0; width: 986px; height: 22px; background: #cae8bd; border: solid #d5d5d5; border-width: 1px 1px 0 0; border-radius: 0 4px 0 0; padding-left: 5px; font: 12px/21px "Open Sans", sans-serif; color: #35442f; }

.taskbar { height: 40px; flex: none; display: flex; background: linear-gradient(90deg, #382e2e, #342f30 24%, #243030 26%, #26302f 40%, #2e3234 55%, #3b4342 66%, #393e3e 78%, #32322f 90%, #2a2a2a); font-family: "Open Sans", sans-serif; color: #fff; }
.start { width: 48px; padding: 12px 0 0 15px; }
.search { width: 344px; height: 40px; background: #f2f2f2; border: 1px solid #c4c4c4; display: flex; align-items: center; padding-left: 11px; font-size: 15px; color: #333; }
.search > span { margin: 0 0 0 11px; }
.search .art { margin-left: auto; }
.apps { display: flex; margin-left: 2px; }
.app { width: 49px; height: 40px; position: relative; display: flex; align-items: center; justify-content: center; }
.app.open::after { content: ""; position: absolute; left: 5px; right: 5px; bottom: 0; height: 2px; background: #76b9ed; }
.app.sel { background: #5c6162; }
.app.sel::after { left: 0; right: 0; }
.tray { flex: 1; display: flex; margin-left: 295px; position: relative; font-size: 15px; line-height: 40px; }
.gold { margin-top: 12px; }
.g { margin-left: 6.500px; }
.pct { margin-left: 9px; color: #f4686a; font-size: 14.500px; }
.sys { margin: 12px 0 0 18px; }
.two { display: flex; flex-direction: column; align-items: center; font-size: 12px; line-height: 18px; padding-top: 2px; }
.lang { margin-left: 10px; }
.clock { margin-left: 12.500px; }
.note-i { margin: 12px 0 0 16.500px; }
.peek { margin-left: auto; margin-right: 4px; width: 1px; height: 40px; background: #777; }
</style>
